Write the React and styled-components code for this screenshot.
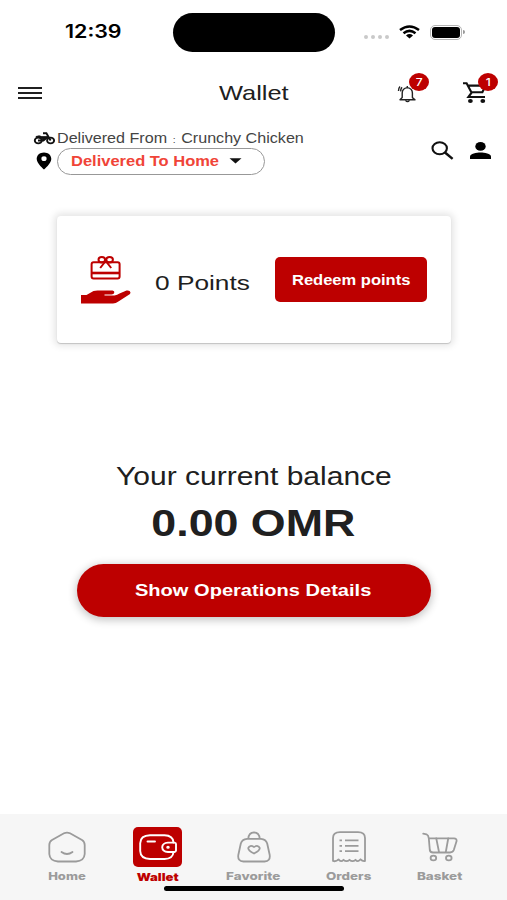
import React from "react";
import styled, { createGlobalStyle } from "styled-components";

const RED = "#bd0000";

const GlobalStyle = createGlobalStyle`
  * { box-sizing: border-box; }
  body { margin: 0; background: #fff; font-family: "Liberation Sans", Arial, sans-serif; color: #202020; }
  svg { display: block; overflow: visible; }
  button { border: 0; padding: 0; margin: 0; background: none; font: inherit; color: inherit; }
`;

/* Extended-width lettering used across the app */
const Wide = styled.span`
  display: inline-block;
  white-space: nowrap;
  font-family: ${(p) => (p.$inter ? '"Inter", sans-serif' : '"Liberation Sans", Arial, sans-serif')};
  font-size: ${(p) => p.$size}px;
  font-weight: ${(p) => p.$weight || 400};
  line-height: 1;
  color: ${(p) => p.$color || "#202020"};
  transform: scaleX(${(p) => p.$stretch || 1});
  transform-origin: ${(p) => p.$origin || "center"};
`;

const Colon = styled.span`
  font-size: 9px;
  padding: 0 1px;
`;

const Screen = styled.div`
  width: 507px;
  height: 900px;
  background: #fff;
  display: flex;
  flex-direction: column;
  overflow: hidden;
`;

const StatusBar = styled.header`
  height: 64px;
  display: grid;
  grid-template-columns: 173px 162px 1fr;
  align-items: center;
`;

const Clock = styled.div`
  padding: 1px 0 0 65px;
`;

const Island = styled.div`
  height: 39px;
  border-radius: 20px;
  background: #000;
`;

const Signals = styled.div`
  display: flex;
  align-items: center;
  padding-left: 29px;
`;

const Dots = styled.div`
  display: flex;
  gap: 3px;
  margin: 9px 10px 0 0;
`;

const Dot = styled.i`
  width: 4px;
  height: 4px;
  border-radius: 50%;
  background: #c9c9c9;
`;

const Battery = styled.div`
  width: 32px;
  height: 15px;
  margin-left: 10px;
  padding: 1px;
  border: 1.5px solid #b5b5b5;
  border-radius: 5px;
  position: relative;
  &::before { content: ""; display: block; height: 100%; border-radius: 3px; background: #000; }
  &::after { content: ""; position: absolute; right: -4px; top: 4px; width: 2px; height: 4px; border-radius: 0 2px 2px 0; background: #999; }
`;

const TitleBar = styled.div`
  height: 57px;
  display: grid;
  grid-template-columns: 173px 162px 1fr;
  align-items: center;
`;

const MenuButton = styled.button`
  margin-left: 18px;
  width: 24px;
  display: grid;
  gap: 3px;
  i { height: 2px; background: #202020; }
`;

const Title = styled.h1`
  margin: 0;
  font-size: 21px;
  line-height: 1;
  text-align: center;
`;

const Actions = styled.div`
  display: flex;
  gap: 38px;
  padding: 1px 0 0 63px;
`;

const IconButton = styled.button`
  position: relative;
  width: 27px;
  height: 26px;
`;

const Badge = styled.span`
  position: absolute;
  left: ${(p) => p.$left}px;
  top: -7px;
  width: 20px;
  height: 18px;
  border-radius: 50%;
  background: ${RED};
  display: flex;
  align-items: center;
  justify-content: center;
`;

const Delivery = styled.section`
  height: 54px;
  display: flex;
  justify-content: space-between;
  padding: 8px 16px 0 33px;
`;

const DeliveryLines = styled.div`
  display: grid;
  grid-template-columns: 24px 1fr;
  grid-template-rows: 18px 28px;
  align-items: center;
`;

const PinSlot = styled.span`
  padding-left: 3px;
`;

const Picker = styled.button`
  width: 208px;
  height: 27px;
  border: 1px solid #989898;
  border-radius: 14px;
  display: flex;
  align-items: center;
  padding-left: 13px;
`;

const PickerText = styled.span`
  width: 158px;
  display: flex;
`;

const Tools = styled.div`
  display: flex;
  gap: 16px;
  padding-top: 12px;
`;

const PointsCard = styled.section`
  width: 394px;
  height: 127px;
  margin: 41px 0 0 57px;
  border-radius: 4px;
  background: #fff;
  box-shadow: 0 0 7px 3px rgba(0, 0, 0, 0.1), 0 1px 1px rgba(0, 0, 0, 0.18);
  display: grid;
  grid-template-columns: 51px 120px 152px;
  column-gap: 11px;
  align-items: center;
  padding-left: 24px;
`;

const Points = styled.div`
  padding: 6px 0 0 12px;
`;

const RedeemButton = styled.button`
  width: 152px;
  height: 45px;
  margin-left: 1px;
  border-radius: 5px;
  background: ${RED};
`;

const Balance = styled.section`
  flex: 1;
  display: flex;
  flex-direction: column;
  align-items: center;
  padding-top: 121px;
`;

const Amount = styled.div`
  height: 37px;
  margin-top: 16px;
`;

const DetailsButton = styled.button`
  width: 354px;
  height: 53px;
  margin-top: 22px;
  border-radius: 27px;
  background: ${RED};
  box-shadow: 0 2px 8px 1px rgba(0, 0, 0, 0.24);
`;

const BottomBar = styled.footer`
  height: 86px;
  background: #f6f6f6;
  position: relative;
`;

const Tabs = styled.nav`
  display: grid;
  grid-template-columns: 86px 95px 97px 94px 87px;
  padding-left: 24px;
`;

const Tab = styled.button`
  display: flex;
  flex-direction: column;
  align-items: center;
  padding-top: 13px;
`;

const TabIcon = styled.span`
  width: 49px;
  height: 40px;
  margin-bottom: ${(p) => (p.$active ? 5 : 4)}px;
  border-radius: 5px;
  background: ${(p) => (p.$active ? RED : "transparent")};
  display: flex;
  align-items: center;
  justify-content: center;
`;

const HomeIndicator = styled.div`
  position: absolute;
  left: 164px;
  bottom: 9px;
  width: 180px;
  height: 5px;
  border-radius: 3px;
  background: #000;
`;

const Wifi = () => (
  <svg width="21" height="14" viewBox="0 0 21 14" fill="none" stroke="#000" strokeWidth="2.6">
    <path d="M1 5Q10.5-2 20 5" />
    <path d="M4.5 8.2Q10.5 3.7 16.5 8.2" />
    <path d="M7 10.4Q10.5 7.7 14 10.4L10.5 13.5Z" fill="#000" stroke="none" />
  </svg>
);

const Bell = () => (
  <svg width="20" height="21" viewBox="0 0 20 21" fill="none" stroke="#222" strokeWidth="1.4">
    <path d="M2 16.7L4.2 14.6V10Q4.2 5.3 9.3 4.6Q14.4 5.3 14.4 10V14.6L17 16.7Z" strokeLinejoin="round" />
    <path d="M9.3 4.5V3M7.5 17.3Q9.5 20 11.5 17.3M4 4.2Q2.6 5.8 2.7 8.4M2 3.5Q.4 5.2 .5 8" />
  </svg>
);

const HeaderCart = () => (
  <svg width="26" height="26" viewBox="0 0 26 26" fill="none" stroke="#111" strokeWidth="2.1">
    <path d="M0 3.2H3.6L8.6 12.7L5.4 17H22M5 5.6H22.4L19.4 12.3H8.6" />
    <ellipse cx="7.4" cy="21.1" rx="2.4" ry="2" fill="#111" stroke="none" />
    <ellipse cx="19.8" cy="21.1" rx="2.4" ry="2" fill="#111" stroke="none" />
  </svg>
);

const Motorbike = () => (
  <svg width="22" height="13" viewBox="0 0 22 13" fill="none" stroke="#111" strokeWidth="1.9">
    <ellipse cx="5.3" cy="8.5" rx="3.5" ry="2.9" />
    <ellipse cx="17.6" cy="8.5" rx="3.5" ry="2.9" />
    <path d="M5 8.5H10.4L15 4.8M10 1.3H13.4L17.6 8.5" />
    <path d="M3 4.5Q6.4 3.1 8.8 4.6H14L10.8 8.5Q8 5 3 5.2Z" fill="#111" strokeWidth=".8" />
  </svg>
);

const Pin = () => (
  <svg width="16" height="18" viewBox="0 0 16 18">
    <path fillRule="evenodd" d="M8 .5C3.7.5.7 3.3.7 7C.7 11.5 8 17.5 8 17.5S15.3 11.5 15.3 7C15.3 3.3 12.3.5 8 .5ZM8 4.3A2.6 2.4 0 1 1 8 9.1A2.6 2.4 0 1 1 8 4.3Z" />
  </svg>
);

const Caret = () => (
  <svg width="13" height="6" viewBox="0 0 13 6"><path d="M.5.3H12.5L6.5 5.6Z" fill="#111" /></svg>
);

const Search = () => (
  <svg width="23" height="19" viewBox="0 0 23 19" fill="none" stroke="#111" strokeWidth="2.1">
    <ellipse cx="8.7" cy="7.2" rx="7.2" ry="6" />
    <path d="M14 11.5L21.6 17.9" strokeWidth="2.5" />
  </svg>
);

const Person = () => (
  <svg width="21" height="18" viewBox="0 0 21 18">
    <ellipse cx="10.5" cy="5.4" rx="5.2" ry="4.3" />
    <path d="M0 18V15.6C0 12.8 6.5 11.6 10.5 11.6S21 12.8 21 15.6V18Z" />
  </svg>
);

const GiftHand = () => (
  <svg width="51" height="50" viewBox="0 0 51 50" fill="none" stroke={RED} strokeWidth="2">
    <rect x="10.6" y="7.2" width="28" height="16.2" rx="2" />
    <path d="M11 18H38.6" strokeWidth="2.6" />
    <ellipse cx="20.8" cy="4.7" rx="3.3" ry="2.7" />
    <ellipse cx="28.6" cy="4.7" rx="3.3" ry="2.7" />
    <path d="M24.7 6L19.2 13M24.7 6L30.2 13" />
    <path transform="translate(-.5 .6)" d="M.5 39.3H6L13 35.4Q15 34.8 17 34.8H32Q34.2 35 33.8 37Q33.5 38.8 31 38.9H24V39.8H34Q36.8 39.5 39 38L46 34.9Q49.6 34.3 50 36.8Q50 38.3 48 39.4L37.5 46.2Q35.5 48 32.5 48H.5Z" fill={RED} stroke="none" />
  </svg>
);

const tabIcons = {
  Home: (
    <svg width="38" height="32" viewBox="0 0 38 32" fill="none" stroke="#9b9b9b" strokeWidth="1.8" strokeLinecap="round">
      <path d="M4 9L16 2.3Q19 .8 22 2.3L34 9Q36.7 10.7 36.7 14V23Q36.2 30 28 30.5H10Q1.8 30 1.3 23V14Q1.3 10.7 4 9Z" />
      <path d="M13.5 21Q19 25 24.5 21" />
    </svg>
  ),
  Wallet: (
    <svg width="38" height="27" viewBox="0 0 38 27" fill="none" stroke="#fff" strokeWidth="1.9" strokeLinecap="round">
      <path d="M34.5 8.5Q34 1.5 25.5 1.3H11Q1.5 1.5 1.2 9.2V17Q1.5 24.8 11 25H25.5Q34 24.8 34.5 18" />
      <path d="M35.5 8.6H29Q23.4 9 23.2 13.3Q23.4 17.7 29 18H35.5Q37 17.7 37 16.5V10Q37 8.8 35.5 8.6ZM8.5 7.5H16" />
      <ellipse cx="29" cy="13.3" rx=".8" ry=".6" fill="#fff" />
    </svg>
  ),
  Favorite: (
    <svg width="34" height="32" viewBox="0 0 34 32" fill="none" stroke="#9b9b9b" strokeWidth="1.8" strokeLinejoin="round">
      <path d="M10 7.8H24Q29 8.3 30.2 12.5L32.7 24Q33.5 30.2 27.5 30.5H6.5Q.5 30.2 1.3 24L3.8 12.5Q5 8.3 10 7.8Z" />
      <path d="M11.3 7.5Q11.8 1.5 17 1.3Q22.2 1.5 22.7 7.5" />
      <path d="M17 22.5Q11.2 19.8 11.2 17.1Q12.8 13.5 17 16Q21.2 13.5 22.8 17.1Q22.8 19.8 17 22.5Z" />
    </svg>
  ),
  Orders: (
    <svg width="34" height="32" viewBox="0 0 34 32" fill="none" stroke="#9b9b9b" strokeWidth="1.8" strokeLinejoin="round">
      <path d="M1 30V7Q1 1.3 8 1.2H26Q33 1.3 33 7V30Q30.5 30.5 28.5 28.3Q26 31.5 23.5 28.8Q20.5 31.5 17.5 28.8Q14.5 31.5 11.5 28.8Q9 31.5 6.5 28.4Q4 31 1 30Z" />
      <path d="M13 9.4H26.5M13 14.8H26.5M13 20.2H26.5" />
      <path d="M7.5 9.4H10M7.5 14.8H10M7.5 20.2H10" />
    </svg>
  ),
  Basket: (
    <svg width="36" height="30" viewBox="0 0 36 30" fill="none" stroke="#9b9b9b" strokeWidth="1.8" strokeLinejoin="round" strokeLinecap="round">
      <path d="M1.2 1.7L4.5 2.3Q6.5 3.2 6.8 6.3L7.8 18Q8.2 20.4 11 20.5H28Q31 20.3 31.8 18L34.6 9Q34.9 6.5 32 6.3H6.8" />
      <path d="M14.3 6.5L17 20M26.2 6.5L23.8 20" />
      <ellipse cx="11.4" cy="26" rx="2.8" ry="2.4" />
      <ellipse cx="26.8" cy="26" rx="2.8" ry="2.4" />
    </svg>
  ),
};

const tabs = [
  { name: "Home", stretch: 1.18 },
  { name: "Wallet", stretch: 1.19, active: true },
  { name: "Favorite", stretch: 1.22 },
  { name: "Orders", stretch: 1.21 },
  { name: "Basket", stretch: 1.22 },
];

export default function App() {
  return (
    <>
      <GlobalStyle />
      <Screen>
        <StatusBar>
          <Clock><Wide $inter $size={18} $weight={600} $stretch={1.19} $origin="left" $color="#000">12:39</Wide></Clock>
          <Island />
          <Signals>
            <Dots><Dot /><Dot /><Dot /><Dot /></Dots>
            <Wifi />
            <Battery />
          </Signals>
        </StatusBar>

        <TitleBar>
          <MenuButton aria-label="Menu"><i /><i /><i /></MenuButton>
          <Title><Wide $size={21} $stretch={1.21}>Wallet</Wide></Title>
          <Actions>
            <IconButton aria-label="Notifications">
              <Bell />
              <Badge $left={11}><Wide $inter $size={11} $weight={500} $stretch={1.1} $color="#fff">7</Wide></Badge>
            </IconButton>
            <IconButton aria-label="Cart">
              <HeaderCart />
              <Badge $left={15}><Wide $inter $size={11} $weight={500} $stretch={1.1} $color="#fff">1</Wide></Badge>
            </IconButton>
          </Actions>
        </TitleBar>

        <Delivery>
          <DeliveryLines>
            <Motorbike />
            <Wide $size={14} $stretch={1.15} $origin="left" $color="#444">Delivered From <Colon>:</Colon> Crunchy Chicken</Wide>
            <PinSlot><Pin /></PinSlot>
            <Picker>
              <PickerText><Wide $size={14} $weight={700} $stretch={1.177} $origin="left" $color="#f04438">Delivered To Home</Wide></PickerText>
              <Caret />
            </Picker>
          </DeliveryLines>
          <Tools><Search /><Person /></Tools>
        </Delivery>

        <PointsCard>
          <GiftHand />
          <Points><Wide $size={21} $stretch={1.25} $origin="left">0 Points</Wide></Points>
          <RedeemButton><Wide $size={14} $weight={700} $stretch={1.18} $color="#fff">Redeem points</Wide></RedeemButton>
        </PointsCard>

        <Balance>
          <Wide $size={25} $stretch={1.2}>Your current balance</Wide>
          <Amount><Wide $size={37} $weight={700} $stretch={1.21}>0.00 OMR</Wide></Amount>
          <DetailsButton><Wide $size={17} $weight={700} $stretch={1.18} $color="#fff">Show Operations Details</Wide></DetailsButton>
        </Balance>

        <BottomBar>
          <Tabs>
            {tabs.map((t) => (
              <Tab key={t.name}>
                <TabIcon $active={t.active}>{tabIcons[t.name]}</TabIcon>
                <Wide $inter $size={11} $weight={t.active ? 900 : 800} $stretch={t.stretch} $color={t.active ? RED : "#9b9b9b"}>{t.name}</Wide>
              </Tab>
            ))}
          </Tabs>
          <HomeIndicator />
        </BottomBar>
      </Screen>
    </>
  );
}
